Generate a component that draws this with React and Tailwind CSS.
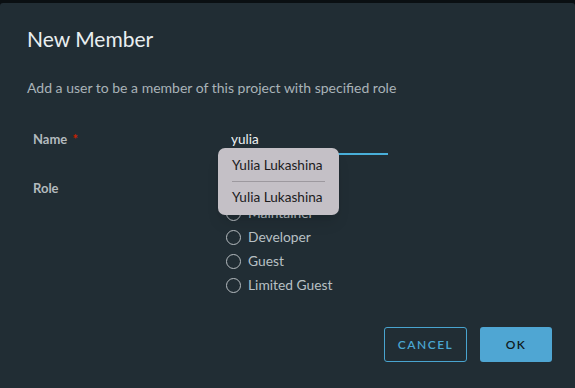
import { useState } from "react";

const roles = ["Project Admin", "Maintainer", "Developer", "Guest", "Limited Guest"];

function RadioOption({ label, checked, onSelect }) {
  return (
    <label className="flex h-6 cursor-pointer items-center gap-[7px]" onClick={onSelect}>
      <span className="flex h-[15px] w-[15px] items-center justify-center rounded-full border border-[#b6bcc0]">
        {checked ? <span className="h-[7px] w-[7px] rounded-full bg-[#49afd9]" /> : null}
      </span>
      <span className="text-[13.8px] text-[#b8c0c4]">{label}</span>
    </label>
  );
}

function App() {
  const [name, setName] = useState("yulia");
  const [role, setRole] = useState("");
  const suggestions = ["Yulia Lukashina", "Yulia Lukashina"];

  return (
    <div
      className="flex h-[388px] w-[575px] flex-col bg-[#0a0f12] pt-[3px]"
      style={{ fontFamily: "Lato, 'Noto Sans', sans-serif" }}
    >
      <div className="flex flex-1 flex-col rounded-t-[3px] bg-[#212d34] px-[27px]">
        <h1 className="mt-[21px] text-[21px] leading-[30px] text-[#e9eef0]">New Member</h1>

        <p className="mt-[24px] text-[14px] leading-[20px] text-[#a9b3b8]">
          Add a user to be a member of this project with specified role
        </p>

        <div className="mt-[32px] grid grid-cols-[193px_1fr] pl-[6px]">
          <div className="text-[13px] font-bold leading-[18px] text-[#b3babe]">
            Name <span className="ml-[2px] text-[#c92100]">*</span>
          </div>
          <div className="relative">
            <input
              value={name}
              onChange={(event) => setName(event.target.value)}
              className="block h-[25px] w-[162px] border-b-2 border-[#49afd9] bg-transparent pt-0 pb-[5px] pl-[5px] text-[13.5px] leading-[16px] text-[#eef2f4] outline-none"
            />
            <div className="absolute left-[-8px] top-[18px] z-10 w-[121px] rounded-[7px] bg-[#c4c0c6] px-[14px] py-[2px] shadow-lg">
              {suggestions.map((item, index) => (
                <div
                  key={index}
                  className={
                    index === 0
                      ? "flex h-[32px] items-center border-b border-[#9d999f] text-[13.6px] text-[#1b1b1d]"
                      : "flex h-[31px] items-center text-[13.6px] text-[#1b1b1d]"
                  }
                >
                  {item}
                </div>
              ))}
            </div>
          </div>

          <div className="mt-[24px] text-[13px] font-bold leading-[18px] text-[#b3babe]">Role</div>
          <div className="mt-[22px] flex flex-col">
            {roles.map((item) => (
              <RadioOption
                key={item}
                label={item}
                checked={role === item}
                onSelect={() => setRole(item)}
              />
            ))}
          </div>
        </div>

        <div className="mt-auto mb-[26px] flex justify-end gap-[13px]">
          <button
            type="button"
            className="h-[35px] w-[83px] rounded-[3px] border border-[#49a4cf] text-[12px] font-semibold tracking-[1.5px] text-[#4aa6d2]"
          >
            CANCEL
          </button>
          <button
            type="button"
            className="-mr-[4px] h-[35px] w-[72px] rounded-[3px] bg-[#4fa6d3] text-[12px] font-semibold tracking-[1.5px] text-[#0f1a20]"
          >
            OK
          </button>
        </div>
      </div>
    </div>
  );
}

export default App;
